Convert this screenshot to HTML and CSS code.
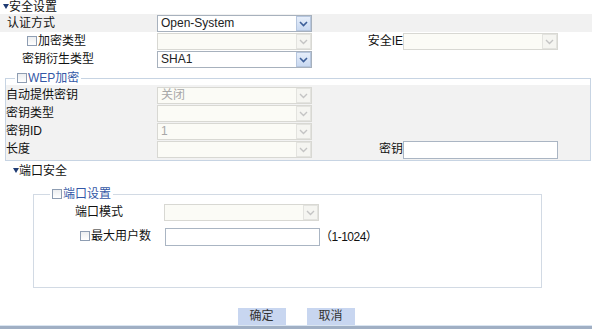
FILE: index.html
```html
<!DOCTYPE html>
<html lang="zh-CN">
<head>
    <meta charset="UTF-8">
    <title>安全设置</title>
    <link rel="stylesheet" href="styles.css">
</head>
<body>
    <div class="page">
        <div class="sec-title"><span class="tri"></span>安全设置</div>

        <div class="row row-shade">
            <div class="lbl lbl-top" style="padding-left:7px">认证方式</div>
            <div class="sel"><span class="sel-val">Open-System</span><span class="sel-btn"><svg width="9" height="6" viewBox="0 0 9 6"><polyline points="1,1 4.5,4.5 8,1" fill="none" stroke="#3d5f99" stroke-width="1.6"/></svg></span></div>
        </div>
        <div class="row">
            <div class="lbl lbl-top" style="padding-left:27px"><span class="chk"></span>加密类型</div>
            <div class="sel sel-off"><span class="sel-val"></span><span class="sel-btn"><svg width="9" height="6" viewBox="0 0 9 6"><polyline points="1,1 4.5,4.5 8,1" fill="none" stroke="#c4c4c4" stroke-width="1.4"/></svg></span></div>
            <div class="lbl-r">安全IE</div>
            <div class="sel sel-off"><span class="sel-val"></span><span class="sel-btn"><svg width="9" height="6" viewBox="0 0 9 6"><polyline points="1,1 4.5,4.5 8,1" fill="none" stroke="#c4c4c4" stroke-width="1.4"/></svg></span></div>
        </div>
        <div class="row">
            <div class="lbl lbl-top" style="padding-left:22px">密钥衍生类型</div>
            <div class="sel"><span class="sel-val">SHA1</span><span class="sel-btn"><svg width="9" height="6" viewBox="0 0 9 6"><polyline points="1,1 4.5,4.5 8,1" fill="none" stroke="#3d5f99" stroke-width="1.6"/></svg></span></div>
        </div>

        <fieldset class="fs fs-wep">
            <legend><span class="chk"></span>WEP加密</legend>
            <div class="fs-body">
                <div class="row">
                    <div class="lbl lbl-wep">自动提供密钥</div>
                    <div class="sel sel-off"><span class="sel-val sel-dim">关闭</span><span class="sel-btn"><svg width="9" height="6" viewBox="0 0 9 6"><polyline points="1,1 4.5,4.5 8,1" fill="none" stroke="#c4c4c4" stroke-width="1.4"/></svg></span></div>
                </div>
                <div class="row">
                    <div class="lbl lbl-wep">密钥类型</div>
                    <div class="sel sel-off"><span class="sel-val"></span><span class="sel-btn"><svg width="9" height="6" viewBox="0 0 9 6"><polyline points="1,1 4.5,4.5 8,1" fill="none" stroke="#c4c4c4" stroke-width="1.4"/></svg></span></div>
                </div>
                <div class="row">
                    <div class="lbl lbl-wep">密钥ID</div>
                    <div class="sel sel-off"><span class="sel-val sel-dim">1</span><span class="sel-btn"><svg width="9" height="6" viewBox="0 0 9 6"><polyline points="1,1 4.5,4.5 8,1" fill="none" stroke="#c4c4c4" stroke-width="1.4"/></svg></span></div>
                </div>
                <div class="row">
                    <div class="lbl lbl-wep">长度</div>
                    <div class="sel sel-off"><span class="sel-val"></span><span class="sel-btn"><svg width="9" height="6" viewBox="0 0 9 6"><polyline points="1,1 4.5,4.5 8,1" fill="none" stroke="#c4c4c4" stroke-width="1.4"/></svg></span></div>
                    <div class="lbl-r">密钥</div>
                    <div class="txt"></div>
                </div>
            </div>
        </fieldset>

        <div class="sec-title sec-port"><span class="tri"></span>端口安全</div>

        <fieldset class="fs fs-port">
            <legend><span class="chk"></span>端口设置</legend>
            <div class="row port-row1">
                <div class="lbl lbl-mode">端口模式</div>
                <div class="sel sel-off"><span class="sel-val"></span><span class="sel-btn"><svg width="9" height="6" viewBox="0 0 9 6"><polyline points="1,1 4.5,4.5 8,1" fill="none" stroke="#c4c4c4" stroke-width="1.4"/></svg></span></div>
            </div>
            <div class="row port-row2">
                <div class="lbl lbl-max"><span class="chk"></span>最大用户数</div>
                <div class="txt"></div>
                <span class="hint">（1-1024）</span>
            </div>
        </fieldset>

        <div class="actions">
            <button class="btn">确定</button>
            <button class="btn">取消</button>
        </div>
        <div class="foot-line"></div>
    </div>
</body>
</html>
```

FILE: styles.css
```css
* {
    box-sizing: border-box;
}
body {
    margin: 0;
    background: #fff;
    color: #111;
    font-family: "Liberation Sans", "Noto Sans CJK SC", sans-serif;
    font-size: 12px;
    line-height: 14px;
}
.page {
    width: 592px;
    height: 330px;
    overflow: hidden;
}
.sec-title {
    height: 14px;
    line-height: 14px;
    padding-left: 3px;
}
.sec-port {
    margin-top: 3px;
    padding-left: 13px;
}
.tri {
    display: inline-block;
    width: 0;
    height: 0;
    border-left: 3.5px solid transparent;
    border-right: 3.5px solid transparent;
    border-top: 5px solid #1f3b73;
    vertical-align: 2px;
}
.row {
    display: flex;
    align-items: flex-start;
    height: 18px;
}
.row-shade {
    background: #f1f1f1;
}
.lbl {
    flex-shrink: 0;
    line-height: 18px;
    white-space: nowrap;
}
.lbl-top {
    width: 157px;
}
.lbl-r {
    flex-shrink: 0;
    width: 91px;
    text-align: right;
    line-height: 18px;
}
.sel {
    margin-top: 1px;
    width: 155px;
    height: 17px;
    border: 1px solid #a7b1bd;
    background: #fff;
    display: flex;
    flex-shrink: 0;
}
.sel-val {
    flex: 1;
    padding-left: 3px;
    line-height: 15px;
    color: #222;
}
.sel-dim {
    color: #a8a8a8;
}
.sel-btn {
    width: 15px;
    height: 15px;
    background: linear-gradient(#e6eefa, #c9d9f1);
    border: 1px solid #b6c6de;
    display: flex;
    align-items: center;
    justify-content: center;
}
.sel-off {
    border-color: #d8d8d3;
    background: #fbfbf6;
}
.sel-off .sel-btn {
    background: #f5f5f1;
    border-color: #e3e3df;
}
.txt {
    margin-top: 1px;
    width: 155px;
    height: 18px;
    border: 1px solid #aab5c3;
    background: #fff;
    flex-shrink: 0;
}
.chk {
    display: inline-block;
    width: 10px;
    height: 10px;
    border: 1px solid #8e9db2;
    background: linear-gradient(#eceef0, #fff);
    vertical-align: -1px;
    margin-right: 1px;
}
.fs {
    min-width: 0;
    padding: 0;
    border: 1px solid #c7d4e3;
}
.fs legend {
    padding: 0 2px;
    line-height: 14px;
    color: #3458a6;
}
.fs-wep {
    margin: 3px 1px 0 5px;
}
.fs-wep legend {
    margin-left: 9px;
}
.fs-body {
    background: #f2f2f2;
    padding: 1px 0 2px;
}
.lbl-wep {
    width: 151px;
}
.fs-port {
    margin: 9px 0 0 33px;
    width: 509px;
    padding-bottom: 42px;
    border-color: #d2dae4;
}
.fs-port legend {
    margin-left: 16px;
}
.port-row1 {
    margin-top: 2px;
}
.port-row2 {
    margin-top: 6px;
}
.lbl-mode {
    width: 130px;
    padding-left: 41px;
}
.lbl-max {
    width: 131px;
    padding-left: 46px;
}
.hint {
    line-height: 20px;
    letter-spacing: -0.5px;
}
.actions {
    display: flex;
    justify-content: center;
    gap: 21px;
    margin-top: 20px;
}
.btn {
    width: 48px;
    height: 17px;
    padding: 0;
    border: none;
    background: #c8d6f0;
    color: #333;
    font-family: "Liberation Sans", "Noto Sans CJK SC", sans-serif;
    font-size: 12px;
    line-height: 17px;
}
.foot-line {
    height: 4px;
    border-top: 1px solid #dae5f1;
    background: #a0afc4;
}
```
